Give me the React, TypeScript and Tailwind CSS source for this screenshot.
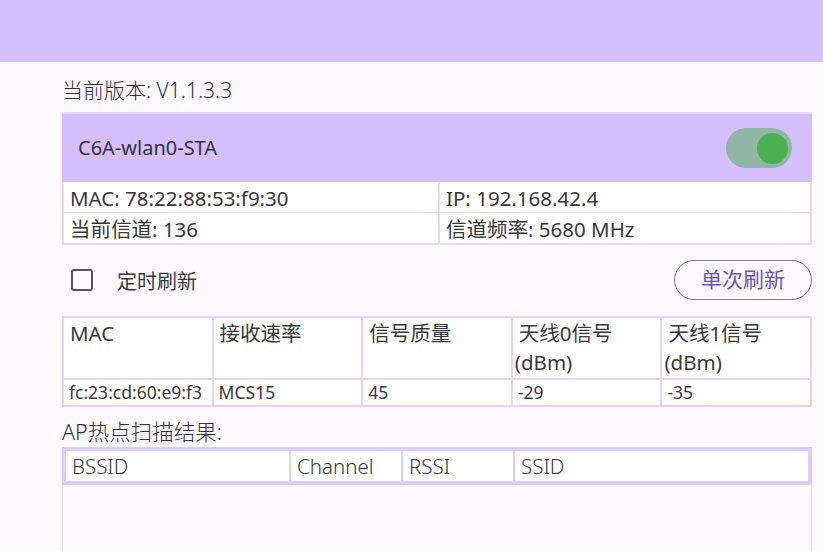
import React from "react";

const sans = "font-['Noto_Sans','Noto_Sans_CJK_SC',sans-serif]";
const thin = "font-['Noto_Sans','Noto_Sans_CJK_SC',sans-serif] font-light";

function Toggle() {
  return (
    <div className="w-[66px] h-[40px] rounded-full bg-[#92b6a6] flex items-center justify-end pr-[4px]">
      <div className="w-[31px] h-[31px] rounded-full bg-[#4cb050]" />
    </div>
  );
}

const staRows = [
  ["MAC: 78:22:88:53:f9:30", "IP: 192.168.42.4"],
  ["当前信道: 136", "信道频率: 5680 MHz"],
];

const stations = [["fc:23:cd:60:e9:f3", "MCS15", "45", "-29", "-35"]];

export default function App() {
  return (
    <div className={`w-[823px] h-[551px] overflow-hidden bg-[#fdf9ff] text-[#383838] ${sans}`}>
      <div className="h-[62px] bg-[#d5bfff]" />

      <div className="ml-[62px] w-[750px]">
        <div className={`h-[50px] pt-[16px] text-[21px] leading-[24px] text-[#333] ${thin}`}>当前版本: V1.1.3.3</div>

        {/* interface card */}
        <div className="border-t-2 border-[#e4d8ff]">
          <div className="h-[68px] bg-[#d5bfff] flex items-center justify-between pl-[16px] pr-[20px]">
            <span className="text-[20px] text-[#333]">C6A-wlan0-STA</span>
            <Toggle />
          </div>
          <div className="border-2 border-t-0 border-[#e4d8ff] bg-[#e4d8ff]">
            {staRows.map((row, i) => (
              <div key={i} className={`grid grid-cols-[374px_1fr] gap-x-[2px] ${i ? "mt-[1px]" : ""}`}>
                {row.map((c) => (
                  <div key={c} className="bg-white h-[30px] pl-[6px] pt-[3px] text-[20.5px] leading-[27px] whitespace-nowrap">{c}</div>
                ))}
              </div>
            ))}
          </div>
        </div>

        {/* refresh controls */}
        <div className="mt-[15px] h-[40px] flex items-center justify-between">
          <label className="flex items-center pl-[9px]">
            <span className="w-[22px] h-[22px] rounded-[3px] border-2 border-[#555]" />
            <span className="ml-[24px] mt-[4px] text-[20px]">定时刷新</span>
          </label>
          <button className="w-[138px] h-[40px] rounded-full border border-[#7d7886] text-[#6f4fc2] text-[21px]">单次刷新</button>
        </div>

        {/* station table */}
        <div className="mt-[16px] border-2 border-[#e2d4ff] bg-[#e2d4ff]">
          <div className="grid grid-cols-5 gap-x-[2px]">
            {["MAC", "接收速率", "信号质量", "天线0信号 (dBm)", "天线1信号 (dBm)"].map((h) => {
              const [a, b] = h.split(" ");
              return (
                <div key={h} className="bg-white h-[60px] pl-[6px] pt-[1px] text-[20.5px] leading-[29px]">
                  <div>{a}</div>
                  {b && <div className="-ml-[4px]">{b}</div>}
                </div>
              );
            })}
          </div>
          {stations.map((r) => (
            <div key={r[0]} className="grid grid-cols-5 gap-x-[2px] mt-[2px]">
              {r.map((c, j) => (
                <div key={j} className="bg-white h-[25px] pl-[5px] text-[17.5px] leading-[25px] whitespace-nowrap overflow-hidden">{c}</div>
              ))}
            </div>
          ))}
        </div>

        <div className={`mt-[12px] h-[26px] text-[21.5px] leading-[26px] text-[#333] ${thin}`}>AP热点扫描结果:</div>

        {/* scan results */}
        <div className="mt-[2px] border-[4px] border-[#dcccff] bg-[#dcccff] grid grid-cols-[223px_110px_110px_1fr] gap-x-[2px]">
          {["BSSID", "Channel", "RSSI", "SSID"].map((h) => (
            <div key={h} className={`bg-white h-[30px] pl-[6px] text-[20.5px] leading-[30px] ${thin}`}>{h}</div>
          ))}
        </div>
        <div className="h-[80px] border-x border-[#e4d8ff]" />
      </div>
    </div>
  );
}
